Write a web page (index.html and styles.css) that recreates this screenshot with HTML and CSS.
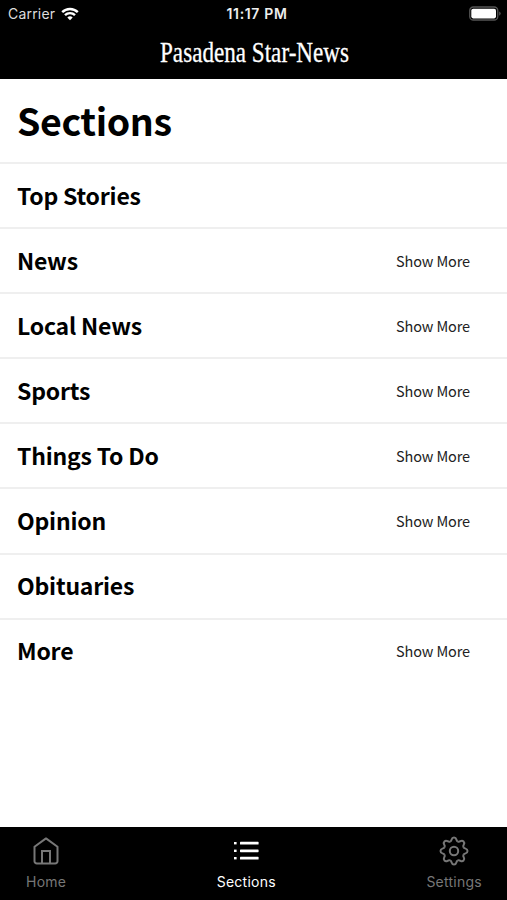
FILE: index.html
```html
<!DOCTYPE html>
<html lang="en">
<head>
<meta charset="UTF-8">
<meta name="viewport" content="width=device-width, initial-scale=1.0">
<title>Pasadena Star-News</title>
<link rel="stylesheet" href="styles.css">
</head>
<body>
<div class="app">
  <header class="header">
    <div class="status-bar">
      <div class="carrier">
        <span>Carrier</span>
        <svg class="wifi" width="18" height="14" viewBox="0 0 18 14" fill="none" stroke="#fff" stroke-width="2.4">
          <path d="M1.2 5.2a11 11 0 0 1 15.6 0"/>
          <path d="M4 8.2a7 7 0 0 1 10 0"/>
          <path d="M9 13.2L6.3 10.5a3.9 3.9 0 0 1 5.4 0z" fill="#fff" stroke="none"/>
        </svg>
      </div>
      <div class="clock">11:17 PM</div>
      <svg class="battery" width="32" height="16" viewBox="0 0 32 16">
        <rect x="0.75" y="1" width="28" height="13" rx="3.6" fill="none" stroke="#555" stroke-width="1.3"/>
        <rect x="2.3" y="2.8" width="24.7" height="9.6" rx="1.8" fill="#fff"/>
        <path d="M30.2 5.4a2.4 2.4 0 0 1 0 4.4z" fill="#555"/>
      </svg>
    </div>
    <svg class="masthead" width="210" height="40" viewBox="0 0 210 40">
      <text x="11" y="27" textLength="189" lengthAdjust="spacingAndGlyphs">Pasadena Star-News</text>
    </svg>
  </header>

  <main class="content">
    <h1 class="title">Sections</h1>
    <ul class="sections">
      <li class="section"><span class="name">Top Stories</span></li>
      <li class="section"><span class="name">News</span><span class="more">Show More</span></li>
      <li class="section"><span class="name">Local News</span><span class="more">Show More</span></li>
      <li class="section"><span class="name">Sports</span><span class="more">Show More</span></li>
      <li class="section"><span class="name">Things To Do</span><span class="more">Show More</span></li>
      <li class="section"><span class="name">Opinion</span><span class="more">Show More</span></li>
      <li class="section"><span class="name">Obituaries</span></li>
      <li class="section"><span class="name">More</span><span class="more">Show More</span></li>
    </ul>
  </main>

  <nav class="tabs">
    <div class="tab">
      <svg width="30" height="30" viewBox="0 0 30 30" fill="none" stroke="currentColor" stroke-width="2" stroke-linejoin="round">
        <path d="M3.5 10.8L15 2.4l11.5 8.4v14.4a2.3 2.3 0 0 1-2.3 2.3H5.8a2.3 2.3 0 0 1-2.3-2.3z"/>
        <path d="M11 27.5V15h8v12.5" stroke-linejoin="miter"/>
      </svg>
      <span>Home</span>
    </div>
    <div class="tab active">
      <svg width="30" height="30" viewBox="0 0 30 30" fill="currentColor">
        <rect x="3" y="6" width="2.6" height="2.4"/>
        <rect x="9" y="5.8" width="18.6" height="2.8" rx="0.6"/>
        <rect x="3" y="13.6" width="2.6" height="2.4"/>
        <rect x="9" y="13.4" width="18.6" height="2.8" rx="0.6"/>
        <rect x="3" y="21" width="2.6" height="2.4"/>
        <rect x="9" y="20.8" width="18.6" height="2.8" rx="0.6"/>
      </svg>
      <span>Sections</span>
    </div>
    <div class="tab">
      <svg width="30" height="30" viewBox="-15 -15 30 30" fill="none" stroke="currentColor" stroke-width="2">
        <defs>
          <path id="tooth" d="M-3.9-9.4C-1.4-10.4-3.4-13.5 0-13.5S1.4-10.4 3.9-9.4"/>
        </defs>
        <use href="#tooth"/>
        <use href="#tooth" transform="rotate(45)"/>
        <use href="#tooth" transform="rotate(90)"/>
        <use href="#tooth" transform="rotate(135)"/>
        <use href="#tooth" transform="rotate(180)"/>
        <use href="#tooth" transform="rotate(225)"/>
        <use href="#tooth" transform="rotate(270)"/>
        <use href="#tooth" transform="rotate(315)"/>
        <circle r="4.2"/>
      </svg>
      <span>Settings</span>
    </div>
  </nav>
</div>
</body>
</html>
```

FILE: styles.css
```css
* {
  box-sizing: border-box;
}

body {
  margin: 0;
  background: #fff;
  color: #000;
  font-family: "Noto Sans CJK SC", "Open Sans", sans-serif;
}

.app {
  display: flex;
  flex-direction: column;
  height: 100vh;
  overflow: hidden;
}

/* header */
.header {
  height: 79px;
  background: #000;
  color: #fff;
  display: flex;
  flex-direction: column;
  align-items: center;
  flex-shrink: 0;
}

.status-bar {
  display: grid;
  grid-template-columns: 1fr auto 1fr;
  align-items: center;
  width: 100%;
  height: 27px;
  padding: 0 6px 0 8px;
  font-family: Inter, sans-serif;
  font-size: 14px;
}

.carrier {
  display: flex;
  align-items: center;
  gap: 6px;
  color: #ddd;
  letter-spacing: 0.2px;
}

.clock {
  padding-left: 5px;
  font-weight: 600;
  letter-spacing: 0.65px;
  color: #eee;
}

.battery {
  justify-self: end;
}

.masthead {
  margin-top: 8px;
  font-family: "Liberation Serif", serif;
  font-size: 30px;
  fill: #fff;
  stroke: #fff;
  stroke-width: 0.3px;
}

/* list */
.content {
  flex: 1;
}

.title {
  margin: 0;
  height: 83px;
  padding: 0 17px;
  font-size: 37.5px;
  line-height: 82px;
  font-weight: bold;
  letter-spacing: -0.4px;
}

.sections {
  list-style: none;
  margin: 0;
  padding: 0;
}

.section {
  display: flex;
  align-items: center;
  justify-content: space-between;
  height: 65.1px;
  padding: 0 37px 0 17px;
  border-top: 2px solid #efefef;
}

.name {
  padding-bottom: 2px;
  font-size: 23px;
  font-weight: bold;
  letter-spacing: -0.2px;
}

.more {
  padding-bottom: 1px;
  font-size: 14.5px;
  letter-spacing: -0.12px;
  color: #222;
}

/* bottom tabs */
.tabs {
  display: flex;
  justify-content: space-between;
  flex-shrink: 0;
  height: 73px;
  padding: 9px 25px 0 26px;
  background: #000;
}

.tab {
  display: flex;
  flex-direction: column;
  align-items: center;
  gap: 7px;
  color: #777;
  font-family: Inter, sans-serif;
  font-size: 14px;
  line-height: 18px;
  letter-spacing: 0.25px;
}

.active {
  color: #fff;
}
```
